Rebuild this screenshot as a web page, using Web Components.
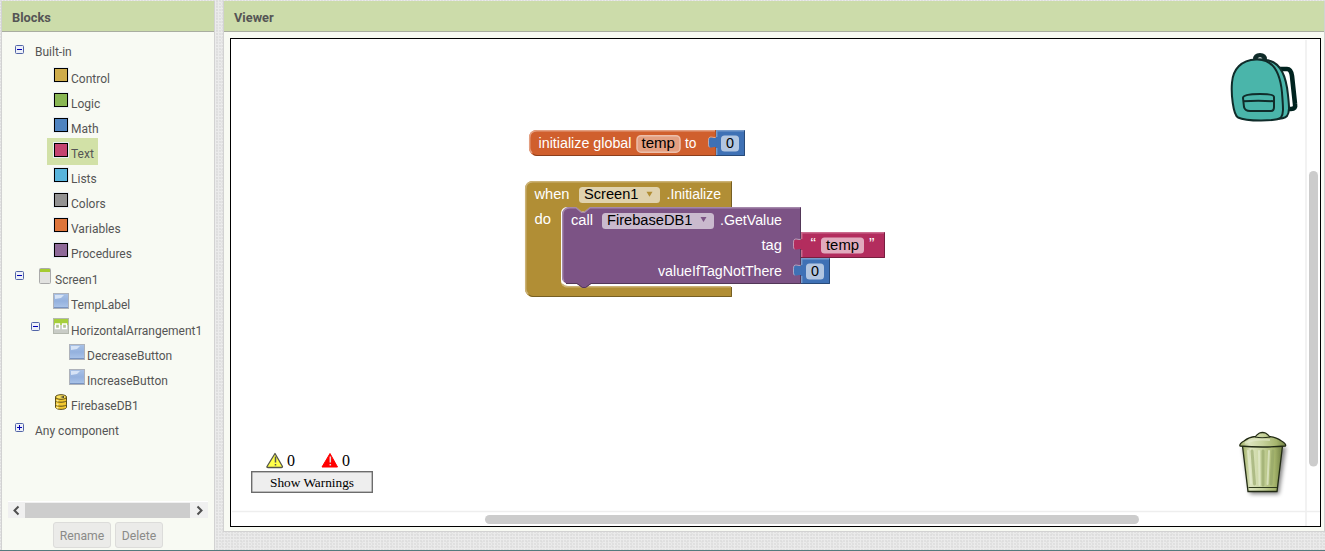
<!DOCTYPE html>
<html lang="en">
<head>
<meta charset="utf-8">
<title>Blocks editor</title>
<style>
html,body{margin:0;height:100%;overflow:hidden}
body{font-family:Roboto,sans-serif;font-size:12px;color:#555}
</style>
</head>
<body>
<editor-app></editor-app>
<script>
const define = (name, html, setup) => {
  const t = document.createElement('template');
  t.innerHTML = html;
  customElements.define(name, class extends HTMLElement {
    constructor() {
      super();
      this.attachShadow({mode: 'open'}).appendChild(t.content.cloneNode(true));
    }
    connectedCallback() { if (setup) setup(this, this.shadowRoot); }
  });
};

define('editor-panel', `
<style>
:host{display:flex;flex-direction:column;box-sizing:border-box;background:#f8faf3;border:1px solid #d2d2d2;border-top:0;min-width:0}
header{height:30px;flex:none;line-height:33px;background:#ccdcaa;border-bottom:1px solid #a9ada0;padding-left:10px;font-weight:700;font-size:12.8px;color:#555}
main{flex:1;min-height:0;display:flex;flex-direction:column}
</style>
<header></header><main><slot></slot></main>`,
(el, root) => { root.querySelector('header').textContent = el.getAttribute('heading'); });

const box = '<rect x="0.5" y="0.5" width="15" height="15" fill="url(#b)" stroke="#aeb2ba"/><path d="M1 14.500h14" stroke="#7893c0"/><path d="M2 2h9l-3 3-6 1z" fill="#d6e3f6"/>';
const icons = {
  component: '<svg width="16" height="16"><defs><linearGradient id="b" x2="0" y2="1"><stop stop-color="#a9c2e6"/><stop offset=".5" stop-color="#94b1de"/><stop offset="1" stop-color="#adc6ea"/></linearGradient></defs>' + box + '</svg>',
  screen: '<svg width="12" height="16"><rect x=".5" y=".5" width="11" height="15" rx="1" fill="#e2e2e0" stroke="#aaa"/><path d="M1 1h10v3H1z" fill="#a5cb31"/></svg>',
  arrangement: '<svg width="16" height="16"><rect x=".5" y=".5" width="15" height="15" fill="#c9ccc6" stroke="#b4b8ae"/><path d="M1 1h14v6H1z" fill="#a6cf3c"/><path d="M2.500 6h4v4.500h-4zM9.500 6h4v4.500h-4z" fill="#b4c497" stroke="#fff" stroke-width="1.300"/></svg>',
  database: '<svg width="16" height="16"><g fill="#f4c92e" stroke="#5a4c18" stroke-width="1"><path d="M2.500 10.500v3c1 2.500 10 2.500 11 0v-3z"/><path d="M2.500 6.500v4c1 2.300 10 2.300 11 0v-4z"/><path d="M2.500 3v3.500c1 2.300 10 2.300 11 0V3z"/><ellipse cx="8" cy="3" rx="5.500" ry="2.300" fill="#ffe45c"/></g><path d="M7 3l4-1v2z" fill="#333"/><path d="M4.500 6v1.500M4.500 9.500v2M4.500 13v1.500" stroke="#fff0a0" stroke-width="2"/></svg>'
};

define('tree-item', `
<style>
:host{display:flex;height:25px;align-items:center;white-space:nowrap;padding-left:calc(13px + var(--indent,0px))}
.toggle{width:9px;height:9px;flex:none;margin-right:11px;position:relative;top:var(--lift,-4px);display:flex}
.body{display:flex;align-items:center;height:25px;position:relative;isolation:isolate}
.icon{display:flex;width:16px;justify-content:center;margin-right:2px;margin-left:var(--gap,0px);position:relative;top:-5px}
.icon:empty{display:none}
.swatch{box-sizing:border-box;width:14px;height:14px;border:1px solid #000;box-shadow:0 0 0 1px #e7edf5}
.label{line-height:25px;font-size:12px}
:host([narrow]) .icon{width:12px;top:-4px}
:host([selected]) .body::before{content:"";position:absolute;z-index:-1;left:-6px;right:-4px;top:-4px;height:27px;background:#d2e1a7}
</style>
<span class="toggle"></span><span class="body"><span class="icon"></span><span class="label"><slot></slot></span></span>`,
(el, root) => {
  const toggle = el.getAttribute('toggle'), icon = el.getAttribute('icon'), color = el.getAttribute('color');
  if (toggle) root.querySelector('.toggle').innerHTML = '<svg width="9" height="9"><rect x=".5" y=".5" width="8" height="8" rx="1" fill="#edf0f8" stroke="#5265a7"/><path d="M2 4.500h5' + (toggle === 'plus' ? 'M4.500 2v5' : '') + '" stroke="#0000b4"/></svg>';
  if (icon) root.querySelector('.icon').innerHTML = icons[icon];
  if (color) root.querySelector('.icon').innerHTML = '<span class="swatch" style="background:' + color + '"></span>';
});

define('h-scroller', `
<style>
:host{display:flex;height:16px;margin:0 6px 0 6px;background:#f0f0f0;align-items:center;justify-content:space-between;border-top:1px solid #fff}
span{flex:1;height:15px;background:#cdcdcd}
svg{width:17px;height:15px}
path{fill:none;stroke:#505050;stroke-width:2}
</style>
<svg><path d="M10.500 3.500l-4 4 4 4"/></svg><span></span><svg style="width:18px"><path d="M7.500 3.500l4 4-4 4"/></svg>`);

define('panel-button', `
<style>
:host{display:block;box-sizing:border-box;height:26px;border:1px solid #dcdcda;border-radius:3px;background:#ebebe9;color:#8a8a88;font-size:12.2px;line-height:26px;text-align:center}
</style><slot></slot>`);

define('component-tree', `
<style>
:host{display:flex;flex-direction:column;flex:1}
nav{height:469px;padding-top:8px;box-sizing:border-box;overflow:hidden}
footer{display:flex;gap:4px;padding:4px 0 0 51px}
</style>
<nav>
<tree-item toggle="minus" style="height:24px;margin-bottom:3px;--lift:-3px">Built-in</tree-item>
<tree-item color="#ceac4b" style="--indent:18px">Control</tree-item>
<tree-item color="#88b653" style="--indent:18px">Logic</tree-item>
<tree-item color="#4e83c0" style="--indent:18px">Math</tree-item>
<tree-item color="#c54370" style="--indent:18px" selected>Text</tree-item>
<tree-item color="#58b4dc" style="--indent:18px">Lists</tree-item>
<tree-item color="#929292" style="--indent:18px">Colors</tree-item>
<tree-item color="#dd753b" style="--indent:18px">Variables</tree-item>
<tree-item color="#8e6998" style="--indent:18px">Procedures</tree-item>
<tree-item toggle="minus" icon="screen" narrow style="height:26px;--gap:4px;--lift:-5px"><span style="margin-left:2px">Screen1</span></tree-item>
<tree-item icon="component" style="--indent:18px">TempLabel</tree-item>
<tree-item toggle="minus" icon="arrangement" style="--indent:16px;--gap:2px;--lift:-5px;height:26px">HorizontalArrangement1</tree-item>
<tree-item icon="component" style="--indent:34px">DecreaseButton</tree-item>
<tree-item icon="component" style="--indent:34px">IncreaseButton</tree-item>
<tree-item icon="database" style="--indent:18px">FirebaseDB1</tree-item>
<tree-item toggle="plus">Any component</tree-item>
</nav>
<h-scroller></h-scroller>
<footer><panel-button style="width:58px">Rename</panel-button><panel-button style="width:48px">Delete</panel-button></footer>`);

const tab = (x, y, fill) => `<path d="M${x} ${y + 5}v2.500c-2 2-8-3-8 3v4c0 6 6 1 8 3v2z" fill="${fill}"/><path d="M${x - .5} ${y + 7}c-2 2-7.500-3-7.500 3.500v4q0 2 1 2.800" fill="none" stroke="#fff" stroke-opacity=".45"/>`;
const value = (x, y, w, fill, dark) => `<path d="M${x} ${y}h${w}v26h-${w}z" fill="${fill}"/><path d="M${x + .7} ${y + 25}V${y + 18}M${x + .7} ${y + 7}V${y + .7}h${w - 1}" fill="none" stroke="#fff" stroke-opacity=".3" stroke-width="1.500"/><path d="M${x} ${y + 25.500}h${w - .5}v-25" fill="none" stroke="${dark}"/>` + tab(x + .5, y, fill);
const label = (x, y, w, s, c = '#fff') => `<text x="${x}" y="${y}" textLength="${w}" lengthAdjust="spacingAndGlyphs" fill="${c}">${s}</text>`;
const field = (x, y, w, h = 16) => `<rect x="${x}" y="${y}" width="${w}" height="${h}" rx="3.500" fill="#fff" fill-opacity=".6"/>`;

define('block-canvas', `
<style>
:host{display:block;flex:1;min-height:0;margin:6px 3px 4px 6px;box-sizing:border-box;border:1px solid #000;background:#fff;overflow:hidden}
svg{display:block}
text{font-family:"Liberation Sans",Arial,sans-serif;font-size:14.67px}
.count{font-family:"Liberation Serif",serif;font-size:16px}
.warn{font-family:"Liberation Serif",serif;font-size:13.330px}
</style>
<svg width="1089" height="487" viewBox="231 39 1089 487">
<defs>
<linearGradient id="can" x2="1" y2="0"><stop stop-color="#9aaa5e"/><stop offset=".2" stop-color="#dce4be"/><stop offset=".5" stop-color="#c6d29c"/><stop offset=".8" stop-color="#a5b46c"/><stop offset="1" stop-color="#718043"/></linearGradient>
<filter id="soft" x="-30%" y="-30%" width="160%" height="160%"><feGaussianBlur stdDeviation="2"/></filter>
</defs>
<path d="M1306 40v486M232 511.500h1088" stroke="#eee" stroke-width="1.500"/>
<rect x="1309" y="171" width="9" height="295.500" rx="4.500" fill="#ccc"/>
<rect x="485" y="515" width="654" height="9" rx="4.500" fill="#ccc"/>

<g id="global">
<path d="M716 130H537a8 8 0 0 0-8 8v10a8 8 0 0 0 8 8h179z" fill="#d05f2d"/>
<path d="M532 153q-2.300-2-2.300-5v-10q0-7.300 7.300-7.300h178" fill="none" stroke="#e39f81" stroke-width="1.500"/>
<path d="M533 154q2 1.500 4 1.500h179v-25" fill="none" stroke="#8b3e1c"/>
${label(538.5, 148, 93, 'initialize global')}
<rect x="637" y="135.700" width="43" height="16.500" rx="4" fill="#e39f81" stroke="#ecbfab" stroke-width="1.500"/>
${label(641.500, 148, 33.500, 'temp', '#000')}
${label(685, 148, 11.500, 'to')}
${value(716, 130, 29, '#3f71b5', '#284a78')}
${field(721, 135.500, 18)}${label(726, 148, 8, '0', '#000')}
</g>

<g id="when">
<path d="M732 181H533a8 8 0 0 0-8 8v100a8 8 0 0 0 8 8h199v-10H567a6 6 0 0 1-6-6V213a6 6 0 0 1 6-6h165z" fill="#b18e35"/>
<path d="M528 294q-2.300-2-2.300-5V189q0-7.300 7.300-7.300h198M562 284q2 2.800 6 2.800h163" fill="none" stroke="#cbb276" stroke-width="1.500"/>
<path d="M529 295q2 1.500 4 1.500h198.500v-9.500M731.500 182v25" fill="none" stroke="#765f23"/>
${label(534.500, 199, 35, 'when')}
${field(579, 187, 81)}${label(584, 199, 54.500, 'Screen1', '#000')}
<path d="M646.500 191.700h6l-3 5z" fill="#b18e35"/>
${label(666.500, 199, 54.500, '.Initialize')}
${label(534.500, 224, 16.500, 'do')}
</g>

<g id="call">
<path d="M801 207H590l-5.500 5h-3l-5.500-5h-6a8 8 0 0 0-8 8v62a7 7 0 0 0 7 7h8l5.500 4h3l5.500-4H801z" fill="#7c5385"/>
<path d="M564 281q-1.300-1-1.300-4v-62q0-7.300 7.300-7.300h6l5.500 4.500h3l5.500-4.500h210" fill="none" stroke="#a488ab" stroke-width="1.500"/>
<path d="M566 283.500h11l5.500 4h3l5.500-4h209.500V208" fill="none" stroke="#523758"/>
<path d="M575.500 206.500l6 5h3l6-5z" fill="#b18e35"/>
${label(571, 225, 22, 'call')}
${field(602, 213, 112)}${label(607, 225, 85.500, 'FirebaseDB1', '#000')}
<path d="M700.500 217h6l-3 5z" fill="#7c5385"/>
${label(720, 225, 62, '.GetValue')}
${label(761.500, 250, 20.500, 'tag')}
${label(658, 276, 124, 'valueIfTagNotThere')}
</g>
${value(801, 232, 84, '#b32d5e', '#771e3f')}
${label(810.500, 248, 5.500, '“')}${label(869, 248, 5.500, '”')}
${field(821, 237.500, 43)}${label(826, 250, 33, 'temp', '#000')}
${value(801, 258, 29, '#3f71b5', '#284a78')}
${field(806, 263.500, 18)}${label(811, 276, 8, '0', '#000')}

<g id="backpack" stroke="#102c2a" stroke-width="2" stroke-linejoin="round">
<path d="M1279 69h8q4 0 5 7l3 28q1 5-4 5h-3" fill="none" stroke="#00231f" stroke-width="4.600"/>
<path d="M1254 59.500q0-5.500 6-5.500t6 5.500l-2 1q-5-3-8 0z" fill="#102c2a"/>
<path d="M1257.500 58.500q2.500-2.500 5 0z" fill="#fff" stroke="none"/>
<path d="M1264 60c15 0 22 14 24 35 1 10 2 17-1 21q-3 3-12 3z" fill="#4ab5aa"/>
<path d="M1256 59.500c17-1 24 12 26 33 1 14 2 21-1 25-4 4-35 4-43 0-5-3-7-24-6-35 1-13 9-22.500 24-23z" fill="#4ab5aa"/>
<path d="M1243 98q0-4 17-4 14 0 14 3v10q0 4-3 4h-21q-5 0-6-4zM1243 101.300q15-1 31 0" fill="none"/>
</g>

<g id="trash">
<path d="M1243 447h43l-7 47h-29z" fill="#000" opacity=".5" filter="url(#soft)"/>
<path d="M1242.500 446h40l-5.500 45.500h-29z" fill="url(#can)" stroke="#222b14" stroke-width="1.300"/>
<g fill="none" stroke-width="3" stroke-linecap="round"><path d="M1252 451l2.500 33M1263 451v34M1273 451l-2 33" stroke="#93a365" opacity=".6"/><path d="M1248 451l3 32M1259 451l.500 34M1269 451l-1.500 33" stroke="#e4ebce" opacity=".7" stroke-width="2"/></g>
<path d="M1248.500 487.500h28.500" stroke="#303b1d"/>
<path d="M1240 446q-1-2 4-5 5-4 11.500-4.500 1-1.500 4-3.500 3-1 6 0 3 2 4 3.500 7 .5 12 4.500 5 3 4 5-23 2-45.500 0z" fill="url(#can)" stroke="#222b14" stroke-width="1.300"/>
<path d="M1255 437q7 1.500 15 0" fill="none" stroke="#252d18" stroke-width="1.200"/><path d="M1245 443q12-5 25-3" fill="none" stroke="#e4ebce" stroke-width="2" opacity=".6"/>
</g>

<g id="warnings">
<path d="M275 453.500l7.500 13q0 1-1 1h-13.500q-1.500 0-1-1z" fill="#ffff48" stroke="#55554b" stroke-width="1.300" stroke-linejoin="round"/>
<path d="M275.500 456.500v6M275.500 464v1.500" stroke="#555" stroke-width="1.500"/>
<text class="count" x="287" y="466">0</text>
<path d="M330 453.500l7.500 13.500h-15.500z" fill="#f00" stroke="#f00" stroke-linejoin="round"/>
<path d="M330.300 456.500v6M330.300 464v1.500" stroke="#ddd" stroke-width="1.500"/>
<text class="count" x="342" y="466">0</text>
<rect x="251.700" y="471.700" width="120.600" height="20.600" fill="#eee" stroke="#6c6c6c" stroke-width="1.400"/>
<text class="warn" x="270" y="487" textLength="84">Show Warnings</text>
</g>
</svg>`);

define('editor-app', `
<style>
:host{display:flex;flex-direction:column;width:1325px;height:551px;box-sizing:border-box;border-bottom:1px solid #557a7d;
background-color:#ebebeb;background-image:radial-gradient(circle at 1px 1px,#d9d9d9 .6px,transparent .9px),radial-gradient(circle at 2px 2px,#e0e0e0 .6px,transparent .9px);background-size:3px 3px,5px 4px}
.columns{display:flex;gap:8px;flex:1;min-height:0;padding:1px 0 0 1px;align-items:flex-start}
.blocks{width:214px;height:549px;border-bottom:0}
.viewer{flex:1;height:531px}
</style>
<div class="columns">
<editor-panel class="blocks" heading="Blocks"><component-tree></component-tree></editor-panel>
<editor-panel class="viewer" heading="Viewer"><block-canvas></block-canvas></editor-panel>
</div>`);
</script>
</body>
</html>
